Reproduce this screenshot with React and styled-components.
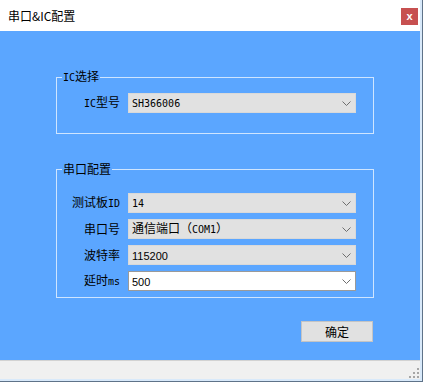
import React from 'react';
import styled, { createGlobalStyle } from 'styled-components';

const GlobalStyle = createGlobalStyle`
  html, body {
    margin: 0;
    padding: 0;
    background: #ffffff;
  }
  * {
    box-sizing: border-box;
  }
`;

const Frame = styled.div`
  width: 423px;
  height: 382px;
  border-right: 1px solid #5f7389;
  border-bottom: 1px solid #5f7389;
  font-family: "Noto Sans CJK SC", "Liberation Sans", sans-serif;
  font-size: 12px;
  color: #000;
`;

const Window = styled.div`
  width: 100%;
  height: 100%;
  display: flex;
  flex-direction: column;
  border-right: 2px solid #d8e9fa;
  border-bottom: 2px solid #d8e9fa;
`;

const TitleBar = styled.div`
  height: 31px;
  flex: none;
  display: flex;
  align-items: center;
  justify-content: space-between;
  padding-left: 8px;
  padding-right: 2px;
  background: #ffffff;
`;

const Title = styled.span`
  font-size: 12px;
  line-height: 14px;
`;

const CloseButton = styled.div`
  width: 17px;
  height: 17px;
  margin-top: 1px;
  display: flex;
  align-items: center;
  justify-content: center;
  background: #c75050;
  color: #fff;
  font-family: "Liberation Sans", sans-serif;
  font-weight: bold;
  font-size: 11px;
  line-height: 1;
`;

const Body = styled.div`
  flex: 1;
  display: flex;
  flex-direction: column;
  align-items: flex-start;
  padding: 38px 46px 0 56px;
  background: #5ba6ff;
`;

const Group = styled.fieldset`
  width: 318px;
  margin: 0 0 ${p => p.$gapAfter || 0}px 0;
  padding: ${p => p.$padTop}px 17px ${p => p.$padBottom}px 0;
  border: 1px solid #cfe5ff;
  border-radius: 0;
  display: grid;
  grid-template-columns: 63px 228px;
  column-gap: 8px;
  row-gap: 6px;
  align-items: center;
`;

const Legend = styled.legend`
  margin-left: 5px;
  padding: 0 1px;
  font-size: 12px;
  line-height: 14px;
`;

const Label = styled.span`
  text-align: right;
  white-space: nowrap;
  line-height: 14px;
`;

const Lat = styled.span`
  font-family: "DejaVu Sans Mono", "Liberation Mono", monospace;
  font-size: 10px;
`;

const Num = styled.span`
  font-family: "Liberation Sans", Arial, sans-serif;
  font-size: 11px;
`;

const Combo = styled.div`
  height: 20px;
  display: flex;
  align-items: center;
  justify-content: space-between;
  padding: 0 4px 0 3px;
  background: ${p => (p.$editable ? '#ffffff' : '#e1e1e1')};
  border: 1px solid ${p => (p.$editable ? '#9a9a9a' : '#d9d9d9')};
  white-space: nowrap;
`;

const Value = styled.span`
  line-height: 14px;
`;

const Chevron = () => (
  <svg width="9" height="5" viewBox="0 0 9 5">
    <path d="M0.5 0.5 L4.5 4.5 L8.5 0.5" fill="none" stroke="#6e6e6e" strokeWidth="1" />
  </svg>
);

const OkButton = styled.button`
  align-self: flex-end;
  margin: 23px 1px 0 0;
  width: 72px;
  height: 21px;
  padding: 0;
  background: #e1e1e1;
  border: 1px solid #c4c4c4;
  font-family: "Noto Sans CJK SC", sans-serif;
  font-size: 12px;
  line-height: 14px;
  color: #000;
`;

const StatusBar = styled.div`
  height: 19px;
  flex: none;
  display: flex;
  justify-content: flex-end;
  align-items: flex-end;
  padding: 0 1px 1px 0;
  background: #f0f0f0;
  border-top: 1px solid #d2d2d2;
`;

const Grip = () => (
  <svg width="12" height="12" viewBox="0 0 12 12">
    {[
      [10, 2],
      [6, 6], [10, 6],
      [2, 10], [6, 10], [10, 10],
    ].map(([x, y]) => (
      <rect key={`${x}-${y}`} x={x} y={y} width="2" height="2" fill="#a6a6a6" />
    ))}
  </svg>
);

const Field = ({ label, value, editable }) => (
  <>
    <Label>{label}</Label>
    <Combo $editable={editable}>
      <Value>{value}</Value>
      <Chevron />
    </Combo>
  </>
);

export default function App() {
  return (
    <>
      <GlobalStyle />
      <Frame>
        <Window>
          <TitleBar>
            <Title>串口&amp;IC配置</Title>
            <CloseButton>x</CloseButton>
          </TitleBar>
          <Body>
            <Group $padTop={8} $padBottom={20} $gapAfter={28}>
              <Legend><Lat>IC</Lat>选择</Legend>
              <Field label={<><Lat>IC</Lat>型号</>} value={<Lat>SH366006</Lat>} />
            </Group>
            <Group $padTop={17} $padBottom={6}>
              <Legend>串口配置</Legend>
              <Field label={<>测试板<Lat>ID</Lat></>} value={<Lat>14</Lat>} />
              <Field label="串口号" value={<>通信端口（<Lat>COM1</Lat>）</>} />
              <Field label="波特率" value={<Num>115200</Num>} />
              <Field label={<>延时<Lat>ms</Lat></>} value={<Num>500</Num>} editable />
            </Group>
            <OkButton>确定</OkButton>
          </Body>
          <StatusBar>
            <Grip />
          </StatusBar>
        </Window>
      </Frame>
    </>
  );
}
